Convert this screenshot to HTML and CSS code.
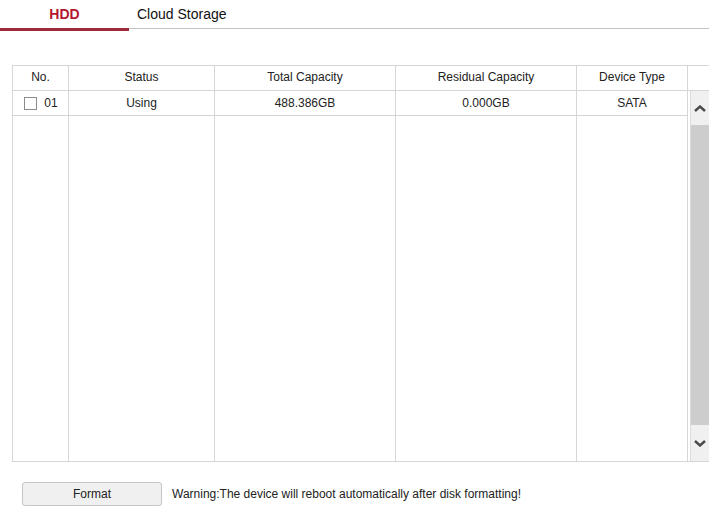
FILE: index.html
```html
<!DOCTYPE html>
<html>
<head>
<meta charset="utf-8">
<link rel="stylesheet" href="styles.css">
</head>
<body>
<div class="tabs">
  <div class="tab active">HDD</div>
  <div class="tab">Cloud Storage</div>
</div>

<div class="grid">
  <div class="head">
    <div class="c w1">No.</div>
    <div class="c w2">Status</div>
    <div class="c w3">Total Capacity</div>
    <div class="c w4">Residual Capacity</div>
    <div class="c w5">Device Type</div>
    <div class="c tail"></div>
  </div>
  <div class="body">
    <div class="rows">
      <div class="cell first"><span class="check"></span><span>01</span></div>
      <div class="cell first">Using</div>
      <div class="cell first">488.386GB</div>
      <div class="cell first">0.000GB</div>
      <div class="cell first">SATA</div>
      <div class="cell"></div>
      <div class="cell"></div>
      <div class="cell"></div>
      <div class="cell"></div>
      <div class="cell"></div>
    </div>
    <div class="scrollbar">
      <div class="sbtn up">
        <svg width="12" height="7" viewBox="0 0 12 7"><path d="M1 6 L6 1.5 L11 6" fill="none" stroke="#4a4a4a" stroke-width="2.4"/></svg>
      </div>
      <div class="thumb"></div>
      <div class="sbtn down">
        <svg width="12" height="7" viewBox="0 0 12 7"><path d="M1 1 L6 5.5 L11 1" fill="none" stroke="#4a4a4a" stroke-width="2.4"/></svg>
      </div>
    </div>
  </div>
</div>

<div class="actions">
  <button class="btn">Format</button>
  <span class="warn">Warning:The device will reboot automatically after disk formatting!</span>
</div>
</body>
</html>
```

FILE: styles.css
```css
html, body {
  margin: 0;
  padding: 0;
  overflow: hidden;
  background: #fff;
}
body {
  font-family: "Liberation Sans", Arial, sans-serif;
  font-size: 12px;
  color: #222;
  width: 709px;
  height: 508px;
}
.tabs {
  display: flex;
  align-items: flex-start;
  height: 28px;
  border-bottom: 1px solid #c4c4c4;
}
.tab {
  height: 28px;
  line-height: 28px;
  font-size: 14px;
  color: #111;
  padding: 0 8px;
}
.tab.active {
  width: 129px;
  box-sizing: border-box;
  padding: 0;
  text-align: center;
  font-weight: bold;
  color: #b3182e;
  border-bottom: 3px solid #a02a3a;
  height: 31px;
  margin-bottom: -3px;
}
.grid {
  margin: 36px 0 0 12px;
  width: 720px;
  border-top: 1px solid #d6d6d6;
  border-left: 1px solid #d6d6d6;
  border-bottom: 1px solid #d6d6d6;
}
.head {
  display: flex;
  height: 25px;
  box-sizing: border-box;
  border-bottom: 1px solid #d6d6d6;
}
.c {
  box-sizing: border-box;
  border-right: 1px solid #d6d6d6;
  display: flex;
  align-items: center;
  justify-content: center;
  padding-bottom: 3px;
}
.w1 { width: 56px; }
.w2 { width: 146px; }
.w3 { width: 181px; }
.w4 { width: 181px; }
.w5 { width: 111px; }
.tail { flex: 1; border-right: 0; }
.body {
  display: flex;
  height: 370px;
}
.rows {
  display: grid;
  grid-template-columns: 56px 146px 181px 181px 111px;
  grid-template-rows: 25px 1fr;
}
.cell {
  box-sizing: border-box;
  border-right: 1px solid #d6d6d6;
  display: flex;
  align-items: center;
  justify-content: center;
}
.cell.first {
  border-bottom: 1px solid #d6d6d6;
}
.check {
  width: 11px;
  height: 11px;
  border: 1px solid #8c8c8c;
  background: #fff;
  margin-right: 7px;
  margin-left: 1px;
}
.scrollbar {
  margin-left: 2px;
  border-left: 1px solid #dcdcdc;
  width: 18px;
  background: #f0f0f0;
  display: flex;
  flex-direction: column;
}
.sbtn {
  display: flex;
  align-items: center;
  justify-content: center;
  height: 34px;
  flex: none;
}
.sbtn.down {
  margin-top: auto;
  height: 36px;
}
.thumb {
  height: 300px;
  background: #cdcdcd;
}
.actions {
  display: flex;
  align-items: center;
  margin: 20px 0 0 22px;
}
.btn {
  width: 140px;
  height: 24px;
  box-sizing: border-box;
  border: 1px solid #c6c6c6;
  border-radius: 3px;
  background: #f0f0f0;
  font-family: "Liberation Sans", Arial, sans-serif;
  font-size: 12px;
  color: #222;
  padding: 0;
  margin: 0;
}
.warn {
  margin-left: 10px;
}
```
